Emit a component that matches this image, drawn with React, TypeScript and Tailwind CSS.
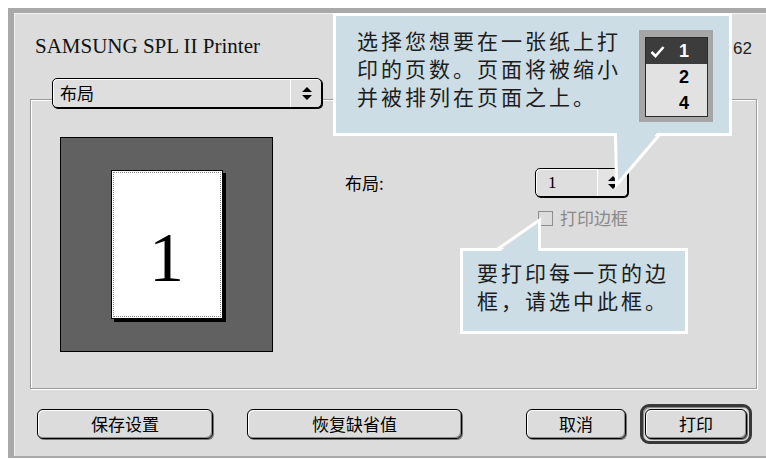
import React from "react";

const cjk = "font-['Noto_Sans_CJK_SC','Noto_Sans',sans-serif]";

const Arrows = () => (
  <svg width="10" height="15" viewBox="0 0 10 15">
    <polygon points="0,6 5,1 10,6" fill="#000" />
    <polygon points="0,9 5,14 10,9" fill="#000" />
  </svg>
);

const MacButton = ({ label, className }: { label: string; className: string }) => (
  <div
    className={`${className} h-[30px] rounded-[6px] border border-black bg-[#dcdcdc] shadow-[inset_1px_1px_0_#fff,inset_-1px_-1px_0_#8c8c8c,1px_1px_0_#777] flex items-center justify-center text-[17px] text-black ${cjk}`}
  >
    {label}
  </div>
);

const pageOptions = [
  { value: "1", checked: true },
  { value: "2", checked: false },
  { value: "4", checked: false },
];

const App = () => {
  return (
    <div className="relative w-[766px] h-[459px] bg-white overflow-hidden pt-[8px] pl-[8px]">
      <div className="h-[450px] bg-[#dcdcdc] border-l-[6px] border-t-[5px] border-b-2 border-[#a9a9a9] shadow-[inset_1px_1px_0_#f2f2f2] flex flex-col">
        {/* title */}
        <div className="flex items-start justify-between pt-[21px] pl-[21px] pr-[14px]">
          <span className="font-['Liberation_Serif',serif] text-[21px] leading-[24px] text-[#111]">
            SAMSUNG SPL II Printer
          </span>
          <span className="font-['Liberation_Sans',sans-serif] text-[17px] leading-[20px] mt-[5px] text-[#222]">
            1.62
          </span>
        </div>

        {/* panel popup */}
        <div className="relative z-10 ml-[38px] mt-[19px] w-[270px] h-[30px] rounded-[5px] border border-black bg-[#dedede] shadow-[inset_1px_1px_0_#fff,1px_1px_0_#000] flex">
          <div className={`flex-1 flex items-center pl-[7px] text-[17px] text-black ${cjk}`}>布局</div>
          <div className="w-[31px] border-l border-white flex items-center justify-center pl-[1px]">
            <Arrows />
          </div>
        </div>

        {/* group box */}
        <div className="-mt-[9px] ml-[16px] w-[727px] h-[290px] border border-[#9c9c9c] shadow-[inset_1px_1px_0_#fff,1px_1px_0_#fff] flex items-start">
          <div className="ml-[29px] mt-[37px] w-[213px] h-[215px] bg-[#616161] border border-black flex items-center justify-center">
            <div className="w-[112px] h-[149px] bg-white border border-black shadow-[3px_3px_0_#000] p-[1px]">
              <div className="h-full border border-dotted border-[#8a8a8a] text-center pt-[50px] font-['Liberation_Serif',serif] text-[70px] leading-[70px] text-black">
                1
              </div>
            </div>
          </div>

          <div className="ml-[72px] mt-[68px] flex flex-col">
            <div className="flex items-center h-[29px]">
              <span className={`w-[190px] text-[17px] text-black ${cjk}`}>布局:</span>
              <div className="w-[93px] h-[29px] rounded-[5px] border border-black bg-[#dedede] shadow-[inset_1px_1px_0_#fff,1px_1px_0_#000] flex">
                <div className="w-[61px] flex items-center pl-[12px] font-['Liberation_Serif',serif] text-[17px] text-black">
                  1
                </div>
                <div className="flex-1 border-l border-white bg-[#e4e4e4] rounded-r-[4px] flex items-center justify-center">
                  <Arrows />
                </div>
              </div>
            </div>
            <div className="ml-[193px] mt-[10px] flex items-center">
              <div className="w-[15px] h-[15px] border border-[#8e8e8e] bg-[#dcdcdc]" />
              <span className={`ml-[7px] text-[17px] leading-[22px] text-[#8a8a8a] ${cjk}`}>打印边框</span>
            </div>
          </div>
        </div>

        {/* buttons */}
        <div className="mt-[15px] ml-[23px] flex items-center">
          <MacButton label="保存设置" className="w-[176px]" />
          <MacButton label="恢复缺省值" className="ml-[34px] w-[215px]" />
          <MacButton label="取消" className="ml-[64px] w-[100px]" />
          <div className="ml-[14px] w-[112px] h-[40px] rounded-[9px] border-[3px] border-[#383838] shadow-[inset_1px_1px_0_#888] p-[2px]">
            <MacButton label="打印" className="w-full" />
          </div>
        </div>
      </div>

      {/* callout: pages per sheet */}
      <div
        className={`absolute left-[333px] top-[13px] w-[399px] h-[123px] bg-[#ccdde6] border-[3px] border-white flex items-start pt-[10px] pl-[21px] ${cjk}`}
      >
        <div className="w-[282px] text-[21px] leading-[28px] tracking-[3px] text-[#1c1c1c]">
          <div>选择您想要在一张纸上打</div>
          <div>印的页数。页面将被缩小</div>
          <div>并被排列在页面之上。</div>
        </div>
        <div className="mt-[4px] w-[74px] h-[92px] bg-[#a6a6a6] pt-[7px] pl-[6px] pr-[5px] pb-[5px]">
          <div className="h-full border border-[#2a2a2a] bg-[#e2e2e2] flex flex-col">
            {pageOptions.map((opt) => (
              <div
                key={opt.value}
                className={`h-[26px] flex items-center font-['Liberation_Sans',sans-serif] font-bold text-[18px] ${
                  opt.checked ? "bg-[#3c3c3c] text-white" : "text-black"
                }`}
              >
                <div className="w-[33px] pl-[4px] flex items-center">
                  {opt.checked && (
                    <svg width="15" height="13" viewBox="0 0 15 13">
                      <polyline points="1.5,7 5.5,11 13.5,2" fill="none" stroke="#fff" strokeWidth="2.6" />
                    </svg>
                  )}
                </div>
                <span>{opt.value}</span>
              </div>
            ))}
          </div>
        </div>
      </div>
      <svg className="absolute left-[600px] top-[120px]" width="80" height="80" viewBox="0 0 80 80">
        <polygon points="16,9 60,9 16.5,64" fill="#ccdde6" />
        <polyline points="15.5,13 16.5,65 61,13" fill="none" stroke="#fff" strokeWidth="3" strokeLinejoin="miter" />
      </svg>

      {/* callout: print border */}
      <div
        className={`absolute left-[460px] top-[248px] w-[228px] h-[86px] bg-[#ccdde6] border-[3px] border-white pt-[7px] pl-[14px] text-[21px] leading-[28px] tracking-[3px] text-[#1c1c1c] ${cjk}`}
      >
        <div>要打印每一页的边</div>
        <div>框，请选中此框。</div>
      </div>
      <svg className="absolute left-[480px] top-[205px]" width="80" height="50" viewBox="0 0 80 50">
        <polygon points="19,47 58.5,17 58.5,47" fill="#ccdde6" />
        <polyline points="17,44.5 59.5,15 59.5,44.5" fill="none" stroke="#fff" strokeWidth="3" />
      </svg>
    </div>
  );
};

export default App;
